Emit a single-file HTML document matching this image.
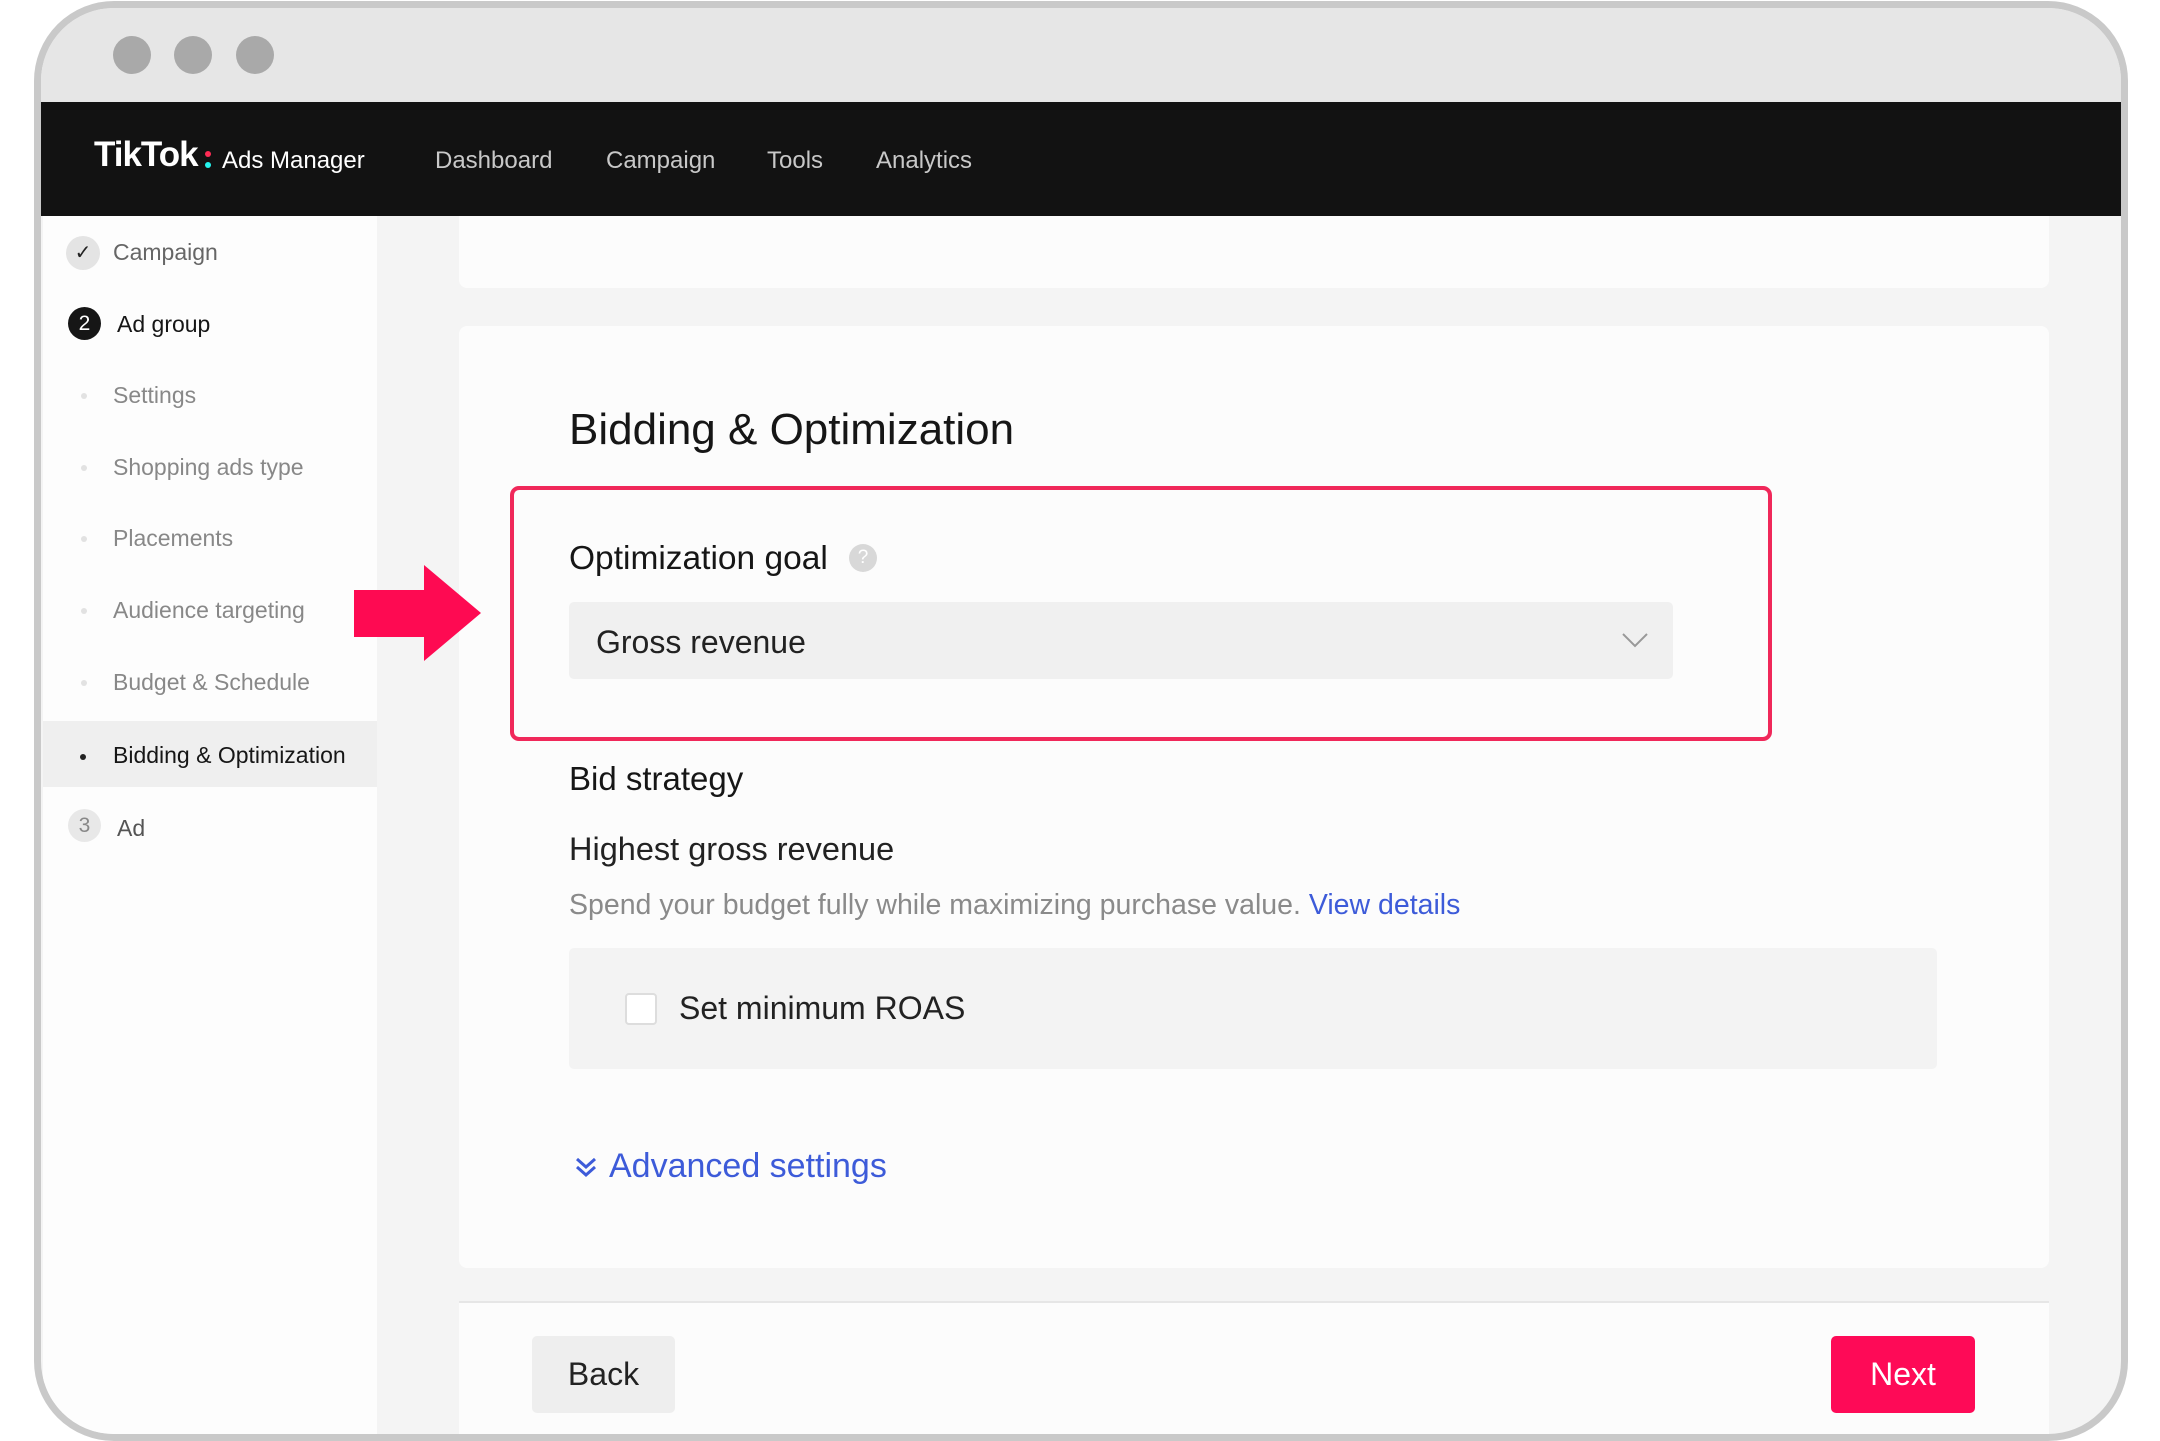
<!DOCTYPE html>
<html><head><meta charset="utf-8"><style>
*{margin:0;padding:0;box-sizing:border-box}
body{width:2160px;height:1440px;background:#fff;position:relative;overflow:hidden;font-family:"Liberation Sans",sans-serif}
.a{position:absolute;white-space:nowrap}
.frame{position:absolute;left:34px;top:1px;width:2094px;height:1440px;border:7px solid #c9c9c9;border-radius:80px;background:#f4f4f4;overflow:hidden}
.in{position:absolute;left:0;top:-8px;width:100%;height:1460px}
.dot{position:absolute;width:38px;height:38px;border-radius:50%;background:#a9a9a9;top:36px}
.side{color:#888;font-size:23px}
.sd{position:absolute;left:40px;width:6px;height:6px;border-radius:50%;background:#e2e2e2}
</style></head><body>
<div class="frame"><div class="in">
  <div class="a" style="left:0;top:0;width:100%;height:102px;background:#e6e6e6"></div>
  <div class="dot" style="left:72px"></div><div class="dot" style="left:133px"></div><div class="dot" style="left:195px"></div>
  <div class="a" style="left:0;top:102px;width:100%;height:114px;background:#121212"></div>
  <div class="a" style="left:53px;top:135px;color:#fff;font-weight:bold;font-size:35px;letter-spacing:-1px">TikTok</div>
  <div class="a" style="left:164px;top:151px;width:6px;height:6px;border-radius:50%;background:#fe2c55"></div>
  <div class="a" style="left:164px;top:162px;width:6px;height:6px;border-radius:50%;background:#25f4ee"></div>
  <div class="a" style="left:181px;top:147px;color:#fff;font-size:24px">Ads Manager</div>
  <div class="a" style="left:394px;top:147px;color:#c8c8c8;font-size:24px">Dashboard</div>
  <div class="a" style="left:565px;top:147px;color:#c8c8c8;font-size:24px">Campaign</div>
  <div class="a" style="left:726px;top:147px;color:#c8c8c8;font-size:24px">Tools</div>
  <div class="a" style="left:835px;top:147px;color:#c8c8c8;font-size:24px">Analytics</div>

  <div class="a" style="left:2px;top:216px;width:334px;height:1240px;background:#fdfdfd"></div>
  <div class="a" style="left:2px;top:721px;width:334px;height:66px;background:#efefef"></div>
  <div class="a" style="left:25px;top:236px;width:34px;height:34px;border-radius:50%;background:#e4e4e4;color:#222;font-size:20px;text-align:center;line-height:34px">✓</div>
  <div class="a side" style="left:72px;top:239px;color:#666">Campaign</div>
  <div class="a" style="left:27px;top:307px;width:33px;height:33px;border-radius:50%;background:#161616;color:#fff;font-size:21px;text-align:center;line-height:33px">2</div>
  <div class="a side" style="left:76px;top:311px;color:#161616">Ad group</div>
  <div class="sd" style="top:393px"></div><div class="a side" style="left:72px;top:382px">Settings</div>
  <div class="sd" style="top:465px"></div><div class="a side" style="left:72px;top:454px">Shopping ads type</div>
  <div class="sd" style="top:536px"></div><div class="a side" style="left:72px;top:525px">Placements</div>
  <div class="sd" style="top:608px"></div><div class="a side" style="left:72px;top:597px">Audience targeting</div>
  <div class="sd" style="top:680px"></div><div class="a side" style="left:72px;top:669px">Budget &amp; Schedule</div>
  <div class="a" style="left:39px;top:754px;width:6px;height:6px;border-radius:50%;background:#222"></div>
  <div class="a side" style="left:72px;top:742px;color:#161616">Bidding &amp; Optimization</div>
  <div class="a" style="left:27px;top:809px;width:33px;height:33px;border-radius:50%;background:#e8e8e8;color:#888;font-size:21px;text-align:center;line-height:33px">3</div>
  <div class="a side" style="left:76px;top:815px;color:#555">Ad</div>

  <div class="a" style="left:418px;top:216px;width:1590px;height:72px;background:#fcfcfc;border-radius:0 0 8px 8px"></div>
  <div class="a" style="left:418px;top:326px;width:1590px;height:942px;background:#fcfcfc;border-radius:8px"></div>
  <div class="a" style="left:528px;top:405px;font-size:44px;color:#161616">Bidding &amp; Optimization</div>
  <div class="a" style="left:469px;top:486px;width:1262px;height:255px;border:4px solid #f0285a;border-radius:9px"></div>
  <div class="a" style="left:528px;top:540px;font-size:33.5px;color:#161616">Optimization goal</div>
  <div class="a" style="left:808px;top:544px;width:28px;height:28px;border-radius:50%;background:#d8d8d8;color:#fff;font-size:19px;text-align:center;line-height:28px">?</div>
  <div class="a" style="left:528px;top:602px;width:1104px;height:77px;background:#f0f0f0;border-radius:5px"></div>
  <div class="a" style="left:555px;top:624px;font-size:32px;color:#222">Gross revenue</div>
  <svg class="a" style="left:1580px;top:630px" width="28" height="20"><path d="M2 4 L14 16 L26 4" fill="none" stroke="#999" stroke-width="2"/></svg>
  <div class="a" style="left:528px;top:760px;font-size:33px;color:#161616">Bid strategy</div>
  <div class="a" style="left:528px;top:831px;font-size:32.5px;color:#222">Highest gross revenue</div>
  <div class="a" style="left:528px;top:889px;font-size:28.5px;color:#8a8a8a">Spend your budget fully while maximizing purchase value. <span style="color:#3d5bd9">View details</span></div>
  <div class="a" style="left:528px;top:948px;width:1368px;height:121px;background:#f3f3f3;border-radius:5px"></div>
  <div class="a" style="left:584px;top:993px;width:32px;height:32px;border:2px solid #ddd;border-radius:4px;background:#fff"></div>
  <div class="a" style="left:638px;top:990px;font-size:32px;color:#222">Set minimum ROAS</div>
  <svg class="a" style="left:533px;top:1155px" width="24" height="24"><path d="M3 4 L12 12 L21 4 M3 12 L12 20 L21 12" fill="none" stroke="#3d5bd9" stroke-width="3"/></svg>
  <div class="a" style="left:568px;top:1147px;font-size:34px;color:#3d5bd9">Advanced settings</div>

  <div class="a" style="left:418px;top:1301px;width:1590px;height:2px;background:#e6e6e6"></div>
  <div class="a" style="left:418px;top:1303px;width:1590px;height:160px;background:#fcfcfc"></div>
  <div class="a" style="left:491px;top:1336px;width:143px;height:77px;background:#eeeeee;border-radius:5px;font-size:32px;color:#222;text-align:center;line-height:77px">Back</div>
  <div class="a" style="left:1790px;top:1336px;width:144px;height:77px;background:#fe0a57;border-radius:5px;font-size:32px;color:#fff;text-align:center;line-height:77px">Next</div>
</div></div>
<svg class="a" style="left:354px;top:565px" width="128" height="97"><polygon points="0,25 70,25 70,0 127,48 70,96 70,72 0,72" fill="#fe0a52"/></svg>
</body></html>
